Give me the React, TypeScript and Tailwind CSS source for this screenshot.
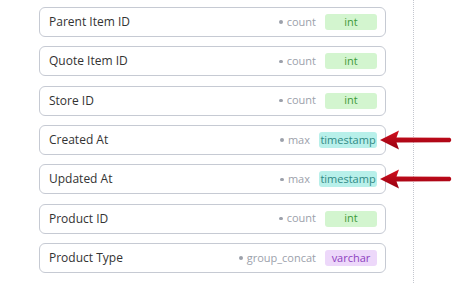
import React from 'react'

type Row = { label: string; agg: string; type: 'int' | 'timestamp' | 'varchar'; arrow?: boolean }

const rows: Row[] = [
  { label: 'Parent Item ID', agg: 'count', type: 'int' },
  { label: 'Quote Item ID', agg: 'count', type: 'int' },
  { label: 'Store ID', agg: 'count', type: 'int' },
  { label: 'Created At', agg: 'max', type: 'timestamp', arrow: true },
  { label: 'Updated At', agg: 'max', type: 'timestamp', arrow: true },
  { label: 'Product ID', agg: 'count', type: 'int' },
  { label: 'Product Type', agg: 'group_concat', type: 'varchar' },
]

const badgeClass = {
  int: 'w-[52px] bg-[#d3f5cf] text-[#3f9b3a]',
  timestamp: 'w-[58px] bg-[#b8f0ea] text-[#2f8a85]',
  varchar: 'w-[52px] bg-[#edd8fa] text-[#8d3fbf]',
}

// red callout arrow pointing at the type badge
const Arrow = () => (
  <svg width="74" height="24" viewBox="0 0 74 24" className="absolute left-[339px] top-[3px]">
    <defs>
      <linearGradient id="ar" x1="0" y1="0" x2="0" y2="1">
        <stop offset="0" stopColor="#d3101f" />
        <stop offset="1" stopColor="#960010" />
      </linearGradient>
    </defs>
    <path d="M2 12 L21 2.5 L18.5 9.6 L72 9.8 Q74.5 12 72 14.2 L18.5 14.4 L21 21.5 Z" fill="url(#ar)" />
  </svg>
)

const App = () => {
  return (
    <div className="relative h-[283px] w-[464px] overflow-hidden bg-white font-['Open_Sans',sans-serif]">
      <div className="absolute left-[413px] top-0 h-full border-l border-dotted border-[#c4c7cf]" />
      <div className="flex flex-col gap-[9.33px] pl-[39px] pt-[7px]">
        {rows.map((r) => (
          <div key={r.label} className="relative">
            <div className="flex h-[30px] w-[347px] items-center rounded-[6px] border border-[#c6cad3] bg-white pl-[9px] pr-[8px]">
              <span className="text-[12px] text-[#333333]">{r.label}</span>
              <span className="ml-auto flex items-center text-[11px] text-[#9ca1ab]">
                <span className="mr-[4px] h-[3.5px] w-[3.5px] rounded-full bg-[#9ca1ab]" />
                {r.agg}
              </span>
              <span
                className={`ml-[9px] flex h-[16px] items-center justify-center rounded-[3px] text-[11px] ${badgeClass[r.type]}`}
              >
                {r.type}
              </span>
            </div>
            {r.arrow && <Arrow />}
          </div>
        ))}
      </div>
    </div>
  )
}

export default App
